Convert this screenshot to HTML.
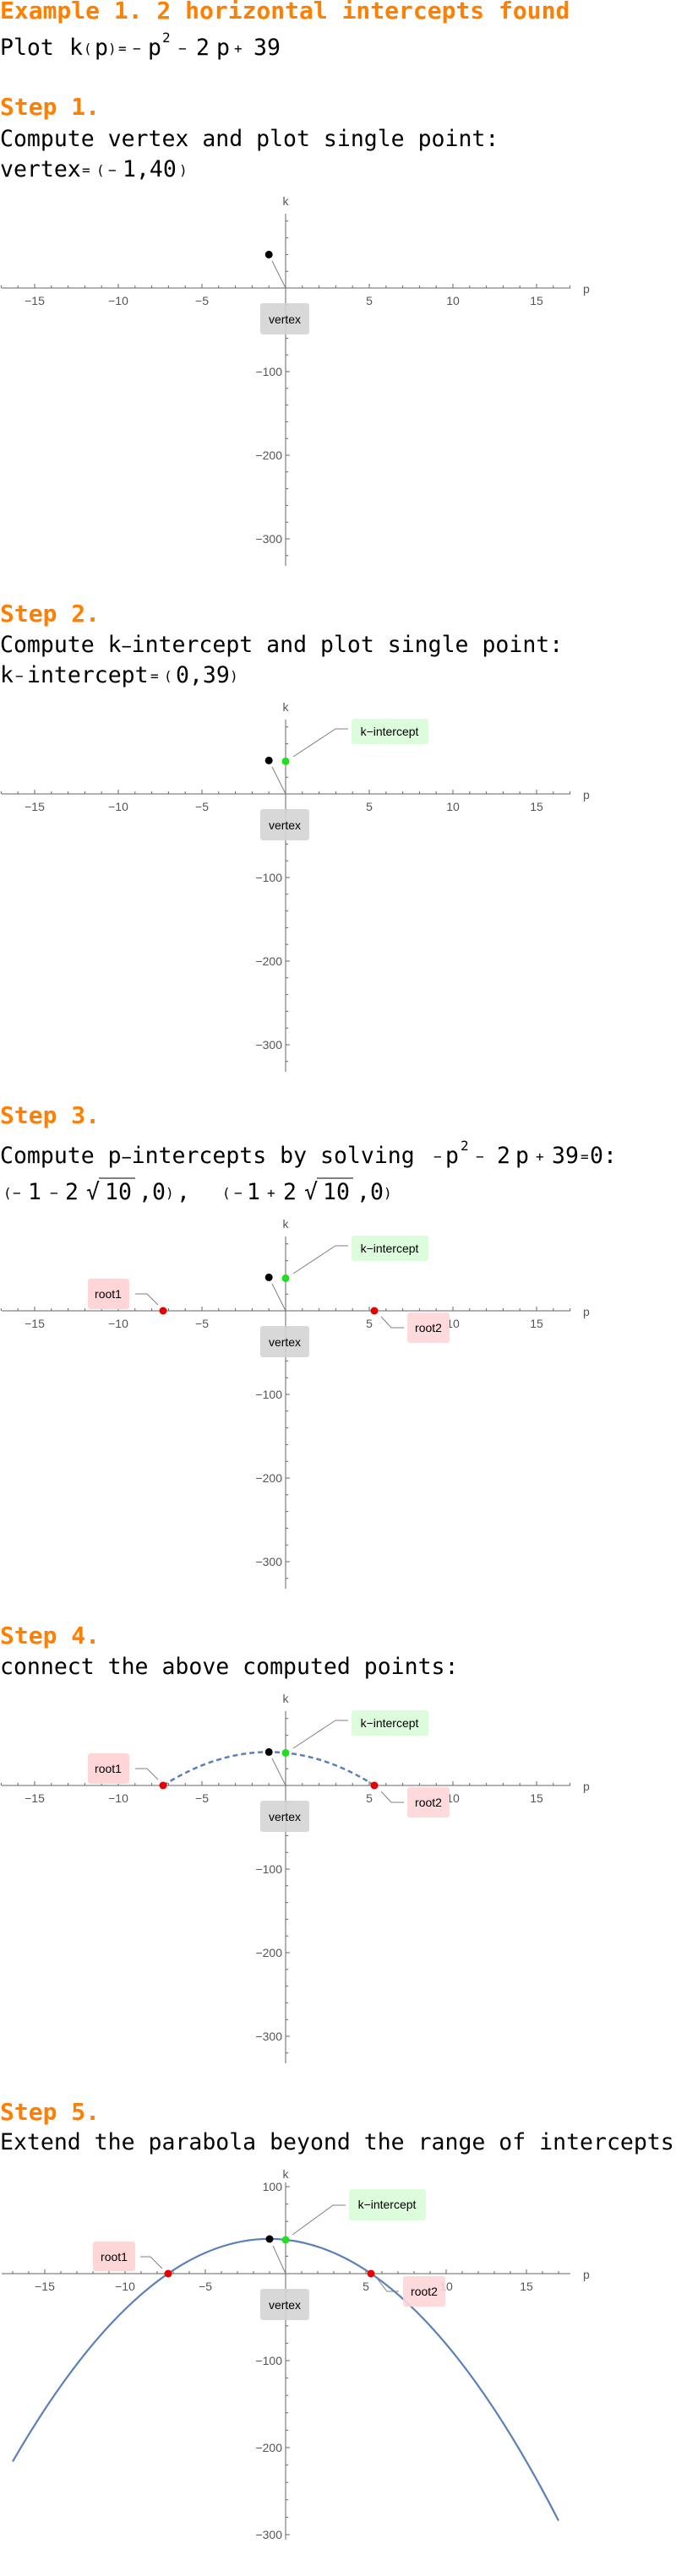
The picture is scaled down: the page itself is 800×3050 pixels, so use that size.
<!DOCTYPE html>
<html><head><meta charset="utf-8"><style>
html,body{margin:0;padding:0;background:#fff;}
svg{display:block}
.h{font-family:"DejaVu Sans Mono","Liberation Mono",monospace;font-weight:bold;font-size:28px;fill:#ff7f00}
.b{font-family:"DejaVu Sans Mono","Liberation Mono",monospace;font-size:26.5px;fill:#000}
.s{font-family:"DejaVu Sans Mono","Liberation Mono",monospace;font-size:16px;fill:#000}
.t{font-family:"Liberation Sans",sans-serif;font-size:14px;fill:#555}
.l{font-family:"Liberation Sans",sans-serif;font-size:14px;fill:#000}
.ax{stroke:#666;stroke-width:1;fill:none}
.ld{stroke:#808080;stroke-width:1;fill:none}
</style></head><body>
<svg width="800" height="3050" viewBox="0 0 800 3050" xmlns="http://www.w3.org/2000/svg">
<defs>
<g id="axes">
<path class="ax" d="M2 0H675M338 -88V329"/>
<path class="ax" d="M-336.6 0v-3M-316.8 0v-3M-297 0v-5M-277.2 0v-3M-257.4 0v-3M-237.6 0v-3M-217.8 0v-3M-198 0v-5M-178.2 0v-3M-158.4 0v-3M-138.6 0v-3M-118.8 0v-3M-99 0v-5M-79.2 0v-3M-59.4 0v-3M-39.6 0v-3M-19.8 0v-3M19.8 0v-3M39.6 0v-3M59.4 0v-3M79.2 0v-3M99 0v-5M118.8 0v-3M138.6 0v-3M158.4 0v-3M178.2 0v-3M198 0v-5M217.8 0v-3M237.6 0v-3M257.4 0v-3M277.2 0v-3M297 0v-5M316.8 0v-3M336.6 0v-3" transform="translate(338,0)"/>
<path class="ax" d="M338 -79.2h3M338 -59.4h3M338 -39.6h3M338 -19.8h3M338 19.8h3M338 39.6h3M338 59.4h3M338 79.2h3M338 99h5M338 118.8h3M338 138.6h3M338 158.4h3M338 178.2h3M338 198h5M338 217.8h3M338 237.6h3M338 257.4h3M338 277.2h3M338 297h5M338 316.8h3"/>
</g>
</defs>

<!-- Header -->
<text class="h" x="0" y="22">Example 1. 2 horizontal intercepts found</text>
<text class="b" y="65"><tspan x="0">Plot</tspan><tspan x="82">k</tspan></text>
<text class="s" x="99" y="63">(</text><text class="b" x="112" y="65">p</text><text class="s" x="128" y="63">)</text>
<text class="s" x="140" y="63">=</text><text class="s" x="157" y="63">−</text>
<text class="b" x="175" y="65">p</text><text class="s" x="192" y="50">2</text>
<text class="s" x="211" y="63">−</text><text class="b" x="232" y="65">2</text><text class="b" x="256" y="65">p</text>
<text class="s" x="277" y="63">+</text><text class="b" x="300" y="65">39</text>

<!-- Step 1 -->
<text class="h" x="0" y="136">Step 1.</text>
<text class="b" x="0" y="173">Compute vertex and plot single point:</text>
<text class="b" x="0" y="209">vertex</text><text class="s" x="97" y="207">=</text><text class="s" x="114" y="207">(</text><text class="s" x="128" y="207">−</text>
<text class="b" x="145" y="209">1,40</text><text class="s" x="212" y="207">)</text>

<g transform="translate(0,341)">
<use href="#axes"/>
<text class="t" x="338" y="-98" text-anchor="middle">k</text>
<text class="t" x="690" y="6">p</text>
<text class="t" x="41" y="20" text-anchor="middle">−15</text><text class="t" x="140" y="20" text-anchor="middle">−10</text><text class="t" x="239" y="20" text-anchor="middle">−5</text>
<text class="t" x="437" y="20" text-anchor="middle">5</text><text class="t" x="536" y="20" text-anchor="middle">10</text><text class="t" x="635" y="20" text-anchor="middle">15</text>
<text class="t" x="334" y="104" text-anchor="end">−100</text><text class="t" x="334" y="203" text-anchor="end">−200</text><text class="t" x="334" y="302" text-anchor="end">−300</text>
<path class="ld" d="M322 -32L338 0"/>
<rect x="308" y="18" width="58" height="37" rx="3" fill="#d4d4d4" fill-opacity="0.9"/>
<text class="l" x="337" y="42" text-anchor="middle">vertex</text>
<circle cx="318.2" cy="-39.6" r="4.5" fill="#000"/>
</g>

<!-- Step 2 -->
<text class="h" x="0" y="736">Step 2.</text>
<text class="b" x="0" y="772">Compute k<tspan font-size="20">−</tspan>intercept and plot single point:</text>
<text class="b" x="0" y="808">k</text><text class="s" x="18" y="806">−</text><text class="b" x="32" y="808">intercept</text>
<text class="s" x="178" y="806">=</text><text class="s" x="194" y="806">(</text><text class="b" x="208" y="808">0,39</text><text class="s" x="272" y="806">)</text>

<g transform="translate(0,940)">
<use href="#axes"/>
<text class="t" x="338" y="-98" text-anchor="middle">k</text>
<text class="t" x="690" y="6">p</text>
<text class="t" x="41" y="20" text-anchor="middle">−15</text><text class="t" x="140" y="20" text-anchor="middle">−10</text><text class="t" x="239" y="20" text-anchor="middle">−5</text>
<text class="t" x="437" y="20" text-anchor="middle">5</text><text class="t" x="536" y="20" text-anchor="middle">10</text><text class="t" x="635" y="20" text-anchor="middle">15</text>
<text class="t" x="334" y="104" text-anchor="end">−100</text><text class="t" x="334" y="203" text-anchor="end">−200</text><text class="t" x="334" y="302" text-anchor="end">−300</text>
<path class="ld" d="M322 -32L338 0M347 -44L397 -77H412"/>
<rect x="308" y="18" width="58" height="37" rx="3" fill="#d4d4d4" fill-opacity="0.9"/>
<text class="l" x="337" y="42" text-anchor="middle">vertex</text>
<rect x="416" y="-89" width="91" height="30" rx="3" fill="#dcfcdc"/>
<text class="l" x="461" y="-69" text-anchor="middle">k−intercept</text>
<circle cx="318.2" cy="-39.6" r="4.5" fill="#000"/>
<circle cx="338" cy="-38.6" r="4.5" fill="#1ee01e"/>
</g>

<!-- Step 3 -->
<text class="h" x="0" y="1330">Step 3.</text>
<text class="b" x="0" y="1377">Compute p<tspan font-size="20">−</tspan>intercepts by solving</text>
<text class="s" x="513" y="1375">−</text><text class="b" x="527" y="1377">p</text><text class="s" x="545" y="1362">2</text>
<text class="s" x="563" y="1375">−</text><text class="b" x="588" y="1377">2</text><text class="b" x="610" y="1377">p</text>
<text class="s" x="634" y="1375">+</text><text class="b" x="653" y="1377">39</text><text class="s" x="687" y="1375">=</text><text class="b" x="698" y="1377">0:</text>

<text class="s" x="4" y="1418">(</text><text class="s" x="15" y="1418">−</text><text class="b" x="33" y="1420">1</text>
<text class="s" x="59" y="1418">−</text><text class="b" x="77" y="1420">2</text>
<text class="b" x="102" y="1420" font-size="24">√</text><path d="M117 1395H160" stroke="#000" stroke-width="1"/>
<text class="b" x="124" y="1420">10</text><text class="b" x="164" y="1420">,0</text><text class="s" x="196" y="1418">)</text><text class="b" x="209" y="1420">,</text>
<text class="s" x="263" y="1418">(</text><text class="s" x="277" y="1418">−</text><text class="b" x="292" y="1420">1</text>
<text class="s" x="316" y="1418">+</text><text class="b" x="335" y="1420">2</text>
<text class="b" x="360" y="1420" font-size="24">√</text><path d="M375 1395H418" stroke="#000" stroke-width="1"/>
<text class="b" x="382" y="1420">10</text><text class="b" x="422" y="1420">,0</text><text class="s" x="454" y="1418">)</text>

<g transform="translate(0,1552)">
<use href="#axes"/>
<text class="t" x="338" y="-98" text-anchor="middle">k</text>
<text class="t" x="690" y="6">p</text>
<text class="t" x="41" y="20" text-anchor="middle">−15</text><text class="t" x="140" y="20" text-anchor="middle">−10</text><text class="t" x="239" y="20" text-anchor="middle">−5</text>
<text class="t" x="437" y="20" text-anchor="middle">5</text><text class="t" x="536" y="20" text-anchor="middle">10</text><text class="t" x="635" y="20" text-anchor="middle">15</text>
<text class="t" x="334" y="104" text-anchor="end">−100</text><text class="t" x="334" y="203" text-anchor="end">−200</text><text class="t" x="334" y="302" text-anchor="end">−300</text>
<path class="ld" d="M322 -32L338 0M347 -44L397 -77H412M160 -20H174L187 -7M451 7L463 20H478"/>
<rect x="308" y="18" width="58" height="37" rx="3" fill="#d4d4d4" fill-opacity="0.9"/>
<text class="l" x="337" y="42" text-anchor="middle">vertex</text>
<rect x="416" y="-89" width="91" height="30" rx="3" fill="#dcfcdc"/>
<text class="l" x="461" y="-69" text-anchor="middle">k−intercept</text>
<rect x="104" y="-38" width="49" height="36" rx="3" fill="#ffd6d8"/>
<text class="l" x="128" y="-15" text-anchor="middle">root1</text>
<rect x="482" y="2" width="50" height="36" rx="3" fill="#ffd6d8" fill-opacity="0.9"/>
<text class="l" x="507" y="25" text-anchor="middle">root2</text>
<circle cx="318.2" cy="-39.6" r="4.5" fill="#000"/>
<circle cx="338" cy="-38.6" r="4.5" fill="#1ee01e"/>
<circle cx="193" cy="0" r="4.5" fill="#e60000"/>
<circle cx="443" cy="0" r="4.5" fill="#e60000"/>
</g>

<!-- Step 4 -->
<text class="h" x="0" y="1946">Step 4.</text>
<text class="b" x="0" y="1982">connect the above computed points:</text>

<g transform="translate(0,2114)">
<use href="#axes"/>
<text class="t" x="338" y="-98" text-anchor="middle">k</text>
<text class="t" x="690" y="6">p</text>
<text class="t" x="41" y="20" text-anchor="middle">−15</text><text class="t" x="140" y="20" text-anchor="middle">−10</text><text class="t" x="239" y="20" text-anchor="middle">−5</text>
<text class="t" x="437" y="20" text-anchor="middle">5</text><text class="t" x="536" y="20" text-anchor="middle">10</text><text class="t" x="635" y="20" text-anchor="middle">15</text>
<text class="t" x="334" y="104" text-anchor="end">−100</text><text class="t" x="334" y="203" text-anchor="end">−200</text><text class="t" x="334" y="302" text-anchor="end">−300</text>
<path d="M193 0Q318.2 -79.2 443.4 0" stroke="#5b80b8" stroke-width="2.5" fill="none" stroke-dasharray="6 4"/>
<path class="ld" d="M322 -32L338 0M347 -44L397 -77H412M160 -20H174L187 -7M451 7L463 20H478"/>
<rect x="308" y="18" width="58" height="37" rx="3" fill="#d4d4d4" fill-opacity="0.9"/>
<text class="l" x="337" y="42" text-anchor="middle">vertex</text>
<rect x="416" y="-89" width="91" height="30" rx="3" fill="#dcfcdc"/>
<text class="l" x="461" y="-69" text-anchor="middle">k−intercept</text>
<rect x="104" y="-38" width="49" height="36" rx="3" fill="#ffd6d8"/>
<text class="l" x="128" y="-15" text-anchor="middle">root1</text>
<rect x="482" y="2" width="50" height="36" rx="3" fill="#ffd6d8" fill-opacity="0.9"/>
<text class="l" x="507" y="25" text-anchor="middle">root2</text>
<circle cx="318.2" cy="-39.6" r="4.5" fill="#000"/>
<circle cx="338" cy="-38.6" r="4.5" fill="#1ee01e"/>
<circle cx="193" cy="0" r="4.5" fill="#e60000"/>
<circle cx="443" cy="0" r="4.5" fill="#e60000"/>
</g>

<!-- Step 5 -->
<text class="h" x="0" y="2510">Step 5.</text>
<text class="b" x="0" y="2545">Extend the parabola beyond the range of intercepts</text>

<g transform="translate(0,2692)">
<path class="ax" d="M2 0H675M338 -108V315"/>
<path class="ax" d="M15 0v-3M34 0v-3M53 0v-5M72 0v-3M91 0v-3M110 0v-3M129 0v-3M148 0v-5M167 0v-3M186 0v-3M205 0v-3M224 0v-3M243 0v-5M262 0v-3M281 0v-3M300 0v-3M319 0v-3M357 0v-3M376 0v-3M395 0v-3M414 0v-3M433 0v-5M452 0v-3M471 0v-3M490 0v-3M509 0v-3M528 0v-5M547 0v-3M566 0v-3M585 0v-3M604 0v-3M623 0v-5M642 0v-3M661 0v-3"/>
<path class="ax" d="M338 -103h5M338 -82.4h3M338 -61.8h3M338 -41.2h3M338 -20.6h3M338 20.6h3M338 41.2h3M338 61.8h3M338 82.4h3M338 103h5M338 123.6h3M338 144.2h3M338 164.8h3M338 185.4h3M338 206h5M338 226.6h3M338 247.2h3M338 267.8h3M338 288.4h3M338 309h5"/>
<text class="t" x="338" y="-113" text-anchor="middle">k</text>
<text class="t" x="690" y="6">p</text>
<text class="t" x="53" y="20" text-anchor="middle">−15</text><text class="t" x="148" y="20" text-anchor="middle">−10</text><text class="t" x="243" y="20" text-anchor="middle">−5</text>
<text class="t" x="433" y="20" text-anchor="middle">5</text><text class="t" x="528" y="20" text-anchor="middle">10</text><text class="t" x="623" y="20" text-anchor="middle">15</text>
<text class="t" x="334" y="-98" text-anchor="end">100</text>
<text class="t" x="334" y="108" text-anchor="end">−100</text><text class="t" x="334" y="211" text-anchor="end">−200</text><text class="t" x="334" y="314" text-anchor="end">−300</text>
<path d="M15 222.5Q338 -337.8 661 292.5" stroke="#5b80b8" stroke-width="2.2" fill="none"/>
<path class="ld" d="M323 -33L338 0M346 -46L394 -81H409M166 -20H178L192 -6M445 4L458 21H472"/>
<rect x="308" y="18" width="58" height="37" rx="3" fill="#d4d4d4" fill-opacity="0.9"/>
<text class="l" x="337" y="42" text-anchor="middle">vertex</text>
<rect x="413" y="-100" width="91" height="37" rx="3" fill="#dcfcdc"/>
<text class="l" x="458" y="-77" text-anchor="middle">k−intercept</text>
<rect x="110" y="-38" width="50" height="35" rx="3" fill="#ffd6d8"/>
<text class="l" x="135" y="-15" text-anchor="middle">root1</text>
<rect x="477" y="3" width="50" height="36" rx="3" fill="#ffd6d8" fill-opacity="0.9"/>
<text class="l" x="502" y="26" text-anchor="middle">root2</text>
<circle cx="319" cy="-41" r="4.5" fill="#000"/>
<circle cx="338" cy="-40" r="4.5" fill="#1ee01e"/>
<circle cx="199" cy="0" r="4.5" fill="#e60000"/>
<circle cx="439" cy="0" r="4.5" fill="#e60000"/>
</g>
</svg>
</body></html>
